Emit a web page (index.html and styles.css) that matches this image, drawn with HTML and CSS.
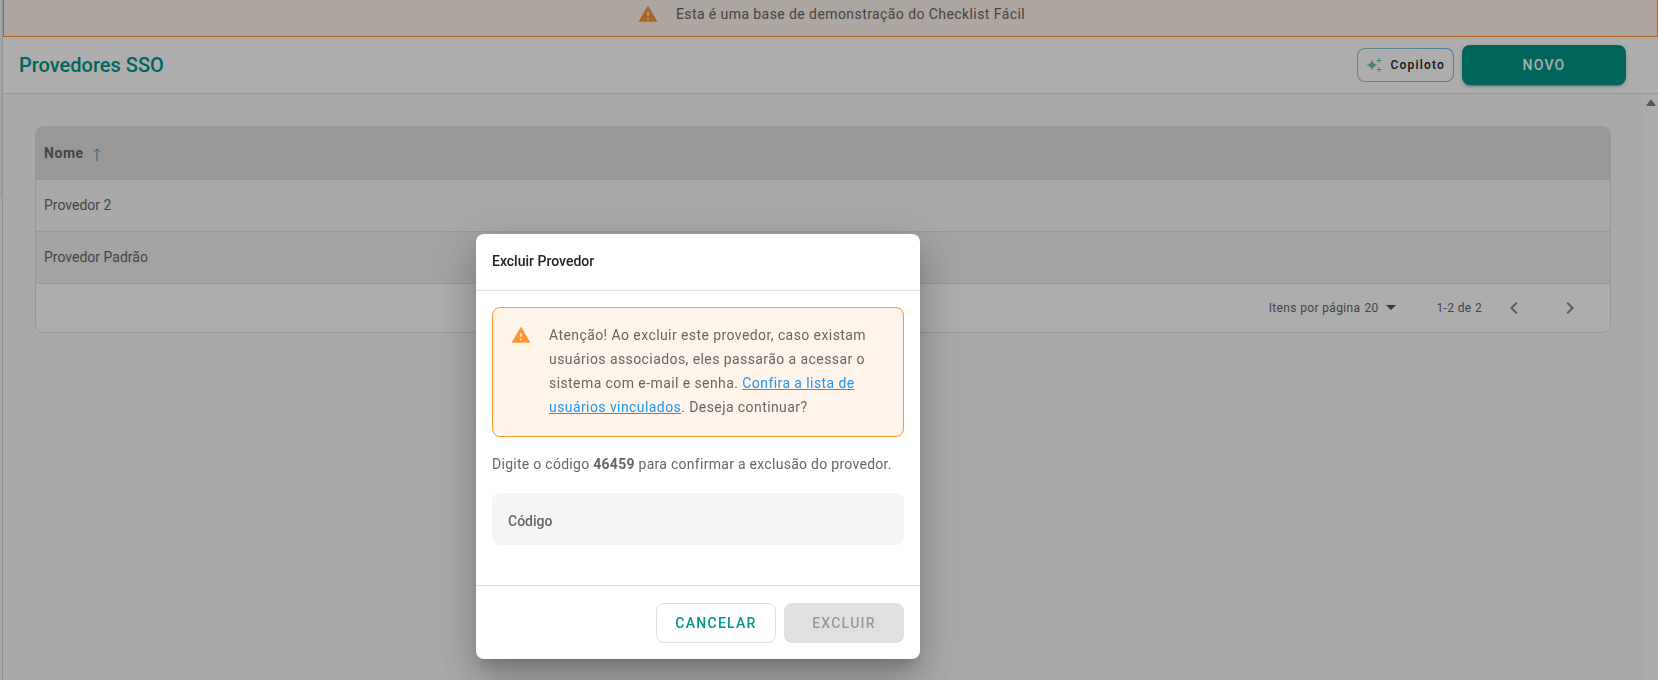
FILE: index.html
```html
<!DOCTYPE html>
<html lang="pt-br">
<head>
  <meta charset="UTF-8">
  <meta name="viewport" content="width=device-width, initial-scale=1.0">
  <title>Provedores SSO</title>
  <link rel="stylesheet" href="styles.css">
</head>
<body>
  <div class="app">
    <!-- Borda do menu lateral -->
    <aside class="sidebar">
      <div class="sidebar-item"></div>
      <div class="sidebar-end"></div>
    </aside>

    <div class="page">
      <!-- Aviso de demonstração -->
      <div class="banner">
        <svg class="warning-icon" viewBox="-2 -2 28 28" aria-hidden="true">
          <path d="M1 21h22L12 2 1 21zm12-3h-2v-2h2v2zm0-4h-2v-4h2v4z"/>
        </svg>
        <span>Esta é uma base de demonstração do Checklist Fácil</span>
      </div>

      <header class="header">
        <h1 class="title">Provedores SSO</h1>
        <div class="header-actions">
          <button type="button" class="copilot">
            <svg class="copilot-icon" viewBox="0 0 16 16" aria-hidden="true">
              <path class="star" d="M6 2.500 Q7 7 11.500 8 Q7 9 6 13.500 Q5 9 .500 8 Q5 7 6 2.500z"/>
              <path class="spark" d="M13 1v5M10.500 3.500h5M13 10v5M10.500 12.500h5"/>
            </svg>
            Copiloto
          </button>
          <button type="button" class="btn btn-new">NOVO</button>
        </div>
      </header>

      <div class="content">
        <main class="main">
          <div class="card">
            <table class="table">
              <thead>
                <tr>
                  <th>
                    Nome
                    <svg class="sort" viewBox="0 0 8 13" aria-hidden="true"><path d="M4 13V1M1 4l3-3 3 3"/></svg>
                  </th>
                </tr>
              </thead>
              <tbody>
                <tr><td>Provedor 2</td></tr>
                <tr><td>Provedor Padrão</td></tr>
              </tbody>
            </table>

            <!-- Paginação -->
            <div class="pagination">
              <div class="per-page">
                <label for="per-page">Itens por página</label>
                <select id="per-page">
                  <option>20</option>
                </select>
                <svg class="caret" viewBox="0 0 10 5" aria-hidden="true"><path d="M0 0h10L5 5z"/></svg>
              </div>
              <span class="range">1-2 de 2</span>
              <div class="pager">
                <button type="button" class="page-btn" aria-label="Página anterior">
                  <svg viewBox="0 0 24 24"><path d="M15.410 7.410 14 6l-6 6 6 6 1.410-1.410L10.830 12z"/></svg>
                </button>
                <button type="button" class="page-btn" aria-label="Próxima página">
                  <svg viewBox="0 0 24 24"><path d="M10 6 8.590 7.410 13.170 12l-4.580 4.590L10 18l6-6z"/></svg>
                </button>
              </div>
            </div>
          </div>
        </main>
        <div class="scrollbar">
          <svg class="scroll-up" viewBox="0 0 10 8" aria-hidden="true"><path d="M4 1.500 Q5 0 6 1.500 L9.500 6 Q10 7 9 7 H1 Q0 7 .500 6z"/></svg>
        </div>
      </div>
    </div>
  </div>

  <!-- Modal de exclusão -->
  <div class="overlay">
    <form class="modal" role="dialog" aria-modal="true" aria-labelledby="modal-title">
      <h2 class="modal-title" id="modal-title">Excluir Provedor</h2>
      <div class="modal-body">
        <div class="alert">
          <svg class="warning-icon" viewBox="-2 -2 28 28" aria-hidden="true">
            <path d="M1 21h22L12 2 1 21zm12-3h-2v-2h2v2zm0-4h-2v-4h2v4z"/>
          </svg>
          <p>Atenção! Ao excluir este provedor, caso existam usuários associados, eles passarão a acessar o sistema com e-mail e senha. <a href="#">Confira a lista de usuários vinculados</a>. Deseja continuar?</p>
        </div>
        <p class="confirm-text">Digite o código <strong>46459</strong> para confirmar a exclusão do provedor.</p>
        <div class="field">
          <label for="code">Código</label>
          <input type="text" id="code">
        </div>
      </div>
      <div class="modal-actions">
        <button type="button" class="btn btn-cancel">CANCELAR</button>
        <button type="submit" class="btn btn-delete" disabled>EXCLUIR</button>
      </div>
    </form>
  </div>
</body>
</html>
```
FILE: styles.css
```css
* {
  box-sizing: border-box;
}

body {
  margin: 0;
  font-family: Roboto, "Liberation Sans", sans-serif;
  font-size: 14px;
  color: #666;
  background: #fafafa;
}

button,
input,
select {
  font-family: inherit;
}

h1,
h2,
p {
  margin: 0;
}

.app {
  display: flex;
  min-height: 100vh;
}

/* Menu lateral */
.sidebar {
  width: 3px;
  flex-shrink: 0;
  border-right: 1px solid #d8d8d8;
}

.sidebar-item {
  height: 194px;
  background: #ecf5f4;
  border-bottom: 1px solid #c8d4d3;
}

.sidebar-end {
  height: 8px;
  background: #ecf5f4;
}

.page {
  flex: 1;
  display: flex;
  flex-direction: column;
}

/* Aviso do topo */
.banner {
  display: flex;
  justify-content: center;
  gap: 16px;
  height: 37px;
  padding-top: 2px;
  line-height: 24px;
  letter-spacing: 0.03em;
  background: #fff4ea;
  border: 1px solid #ff9533;
  border-top: 0;
}

.warning-icon {
  width: 24px;
  height: 24px;
  flex-shrink: 0;
  fill: #ff9533;
}

/* Cabeçalho */
.header {
  display: flex;
  align-items: center;
  justify-content: space-between;
  height: 57px;
  padding: 0 32px 0 16px;
  background: #fff;
  border-bottom: 1px solid #e0e0e0;
}

.title {
  font-size: 20px;
  font-weight: 500;
  color: #009688;
}

.header-actions {
  display: flex;
  align-items: center;
  gap: 8px;
}

.btn {
  height: 40px;
  min-width: 120px;
  padding: 0 16px;
  border: 0;
  border-radius: 8px;
  font-size: 14px;
  font-weight: 500;
  letter-spacing: 0.09em;
}

.btn-new {
  width: 164px;
  color: #fff;
  background: #009688;
  box-shadow: 0 3px 1px -2px rgba(0, 0, 0, 0.2), 0 2px 2px rgba(0, 0, 0, 0.14), 0 1px 5px rgba(0, 0, 0, 0.12);
}

.copilot {
  display: flex;
  align-items: center;
  gap: 8px;
  height: 34px;
  padding: 0 8px;
  border: 1px solid transparent;
  border-radius: 8px;
  background: linear-gradient(#fff, #fff) padding-box, linear-gradient(90deg, #8cc8c4, #82b4dc) border-box;
  font-size: 12px;
  font-weight: 500;
  letter-spacing: 0.1em;
  color: #212121;
}

.copilot-icon {
  width: 16px;
  height: 16px;
}

.star {
  fill: #6cc5a1;
}

.spark {
  fill: none;
  stroke: #6cc5b5;
}

/* Conteúdo e tabela */
.content {
  flex: 1;
  display: flex;
}

.main {
  flex: 1;
  padding: 32px;
}

.card {
  overflow: hidden;
  border: 1px solid #e0e0e0;
  border-radius: 8px;
  background: #fff;
}

.table {
  width: 100%;
  border-collapse: collapse;
}

.table th,
.table td {
  height: 52px;
  padding: 0 8px;
  text-align: left;
  border-bottom: 1px solid #e0e0e0;
}

.table th {
  background: #e0e0e0;
  letter-spacing: 0.04em;
}

.table td {
  background: #fafafa;
}

.table tr:nth-child(2) td {
  background: #f0f0f0;
}

.sort {
  width: 8px;
  height: 13px;
  margin-left: 5px;
  vertical-align: -3px;
  fill: none;
  stroke: #5a86ac;
}

.pagination {
  display: flex;
  align-items: center;
  justify-content: flex-end;
  height: 48px;
  padding-right: 28px;
  font-size: 12px;
  letter-spacing: 0.03em;
}

.per-page {
  display: flex;
  align-items: center;
}

.per-page select {
  width: 18px;
  margin: 0 4px;
  padding: 0;
  border: 0;
  appearance: none;
  background: none;
  font-size: 12px;
  letter-spacing: inherit;
  color: inherit;
}

.caret {
  width: 10px;
  height: 5px;
  fill: #555;
}

.range {
  margin-left: 40px;
}

.pager {
  display: flex;
  gap: 32px;
  margin-left: 20px;
}

.page-btn {
  width: 24px;
  height: 24px;
  padding: 0;
  border: 0;
  background: none;
  fill: #888;
}

.page-btn svg {
  display: block;
}

.scrollbar {
  display: flex;
  justify-content: center;
  align-items: flex-start;
  width: 15px;
  padding-top: 5px;
  background: #fcfcfc;
}

.scroll-up {
  width: 10px;
  height: 8px;
  fill: #7f7f7f;
}

/* Modal */
.overlay {
  position: fixed;
  inset: 0;
  display: flex;
  align-items: flex-start;
  justify-content: center;
  padding: 234px 262px 0 0;
  background: rgba(0, 0, 0, 0.32);
}

.modal {
  width: 444px;
  border-radius: 8px;
  background: #fff;
  box-shadow: 0 11px 15px -7px rgba(0, 0, 0, 0.2), 0 24px 38px 3px rgba(0, 0, 0, 0.14), 0 9px 46px 8px rgba(0, 0, 0, 0.12);
}

.modal-title {
  padding: 15px 16px 17px;
  font-size: 14px;
  font-weight: 500;
  line-height: 24px;
  color: #212121;
  border-bottom: 1px solid #e0e0e0;
}

.modal-body {
  padding: 16px 16px 40px;
}

.alert {
  display: flex;
  gap: 16px;
  padding: 15px 16px 17px;
  border: 1px solid #ff9533;
  border-radius: 8px;
  background: #fff4ea;
  line-height: 24px;
  letter-spacing: 0.03em;
}

.alert a {
  color: #2196f3;
}

.confirm-text {
  margin: 15px 0 17px;
  line-height: 24px;
  letter-spacing: 0.02em;
}

.field {
  display: flex;
  align-items: center;
  gap: 8px;
  height: 52px;
  padding: 4px 16px 0;
  border-radius: 8px;
  background: #f5f5f5;
}

.field label {
  font-weight: 500;
}

.field input {
  flex: 1;
  border: 0;
  outline: 0;
  background: none;
  font-size: 14px;
}

.modal-actions {
  display: flex;
  justify-content: flex-end;
  gap: 8px;
  padding: 17px 16px 16px;
  border-top: 1px solid #e0e0e0;
}

.btn-cancel {
  color: #009688;
  background: #fff;
  border: 1px solid #e0e0e0;
}

.btn-delete {
  color: #999;
  background: #e0e0e0;
}
```
